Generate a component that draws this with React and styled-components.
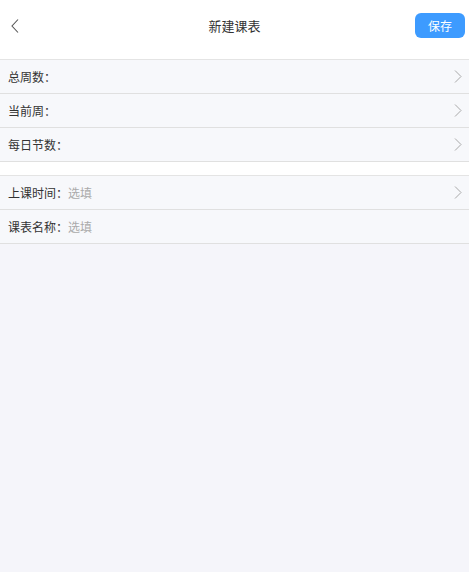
import React from "react";
import styled, { createGlobalStyle } from "styled-components";

const Global = createGlobalStyle`
  html, body { margin: 0; padding: 0; background: #f5f5fa; }
  body { font-family: "Noto Sans CJK SC", "Noto Sans", sans-serif; }
  #root { min-height: 572px; }
`;

const Page = styled.div`
  width: 469px;
  min-height: 572px;
  background: #f5f5fa;
`;

const Header = styled.header`
  height: 59px;
  background: #fff;
  border-bottom: 1px solid #e4e4e4;
  display: grid;
  grid-template-columns: 60px 1fr 60px;
  align-items: center;
`;

const BackBtn = styled.div`
  display: flex;
  align-items: center;
  padding-left: 11px;
  height: 100%;
  padding-bottom: 7px;
  box-sizing: border-box;
`;

const Title = styled.div`
  text-align: center;
  font-size: 13px;
  color: #333;
  padding-bottom: 9px;
`;

const SaveWrap = styled.div`
  display: flex;
  justify-content: flex-end;
  padding-right: 4px;
  padding-bottom: 9px;
`;

const SaveButton = styled.button`
  width: 50px;
  height: 25px;
  border: none;
  border-radius: 6px;
  background: #3d9bff;
  color: #fff;
  font-family: inherit;
  font-size: 12px;
  padding: 0;
`;

const Section = styled.div`
  background: #f7f8fb;
`;

const Gap = styled.div`
  height: 13px;
  background: #fff;
  border-bottom: 1px solid #e4e4e4;
`;

const Row = styled.div`
  height: 33px;
  border-bottom: 1px solid #e0e0e0;
  display: flex;
  align-items: center;
  padding: 0 7px 0 8px;
  background: #f7f8fb;
`;

const Label = styled.span`
  font-size: 12px;
  color: #333;
  width: 60px;
  flex: none;
`;

const Placeholder = styled.span`
  font-size: 12px;
  color: #aaa;
  flex: 1;
`;

const Chevron = () => (
  <svg width="8" height="13" viewBox="0 0 8 13" style={{ marginLeft: "auto" }}>
    <path d="M1 0.5 L7 6.5 L1 12.5" fill="none" stroke="#a8a8a8" strokeWidth="1" />
  </svg>
);

const BackIcon = () => (
  <svg width="8" height="14" viewBox="0 0 8 14">
    <path d="M7 0.5 L1 7 L7 13.5" fill="none" stroke="#555" strokeWidth="1.1" />
  </svg>
);

const items1 = ["总周数：", "当前周：", "每日节数："];
const items2 = [
  { label: "上课时间：", arrow: true },
  { label: "课表名称：", arrow: false },
];

export default function App() {
  return (
    <Page>
      <Global />
      <Header>
        <BackBtn>
          <BackIcon />
        </BackBtn>
        <Title>新建课表</Title>
        <SaveWrap>
          <SaveButton>保存</SaveButton>
        </SaveWrap>
      </Header>
      <Section>
        {items1.map((l) => (
          <Row key={l}>
            <Label>{l}</Label>
            <Chevron />
          </Row>
        ))}
      </Section>
      <Gap />
      <Section>
        {items2.map((it) => (
          <Row key={it.label}>
            <Label>{it.label}</Label>
            <Placeholder>选填</Placeholder>
            {it.arrow && <Chevron />}
          </Row>
        ))}
      </Section>
    </Page>
  );
}
